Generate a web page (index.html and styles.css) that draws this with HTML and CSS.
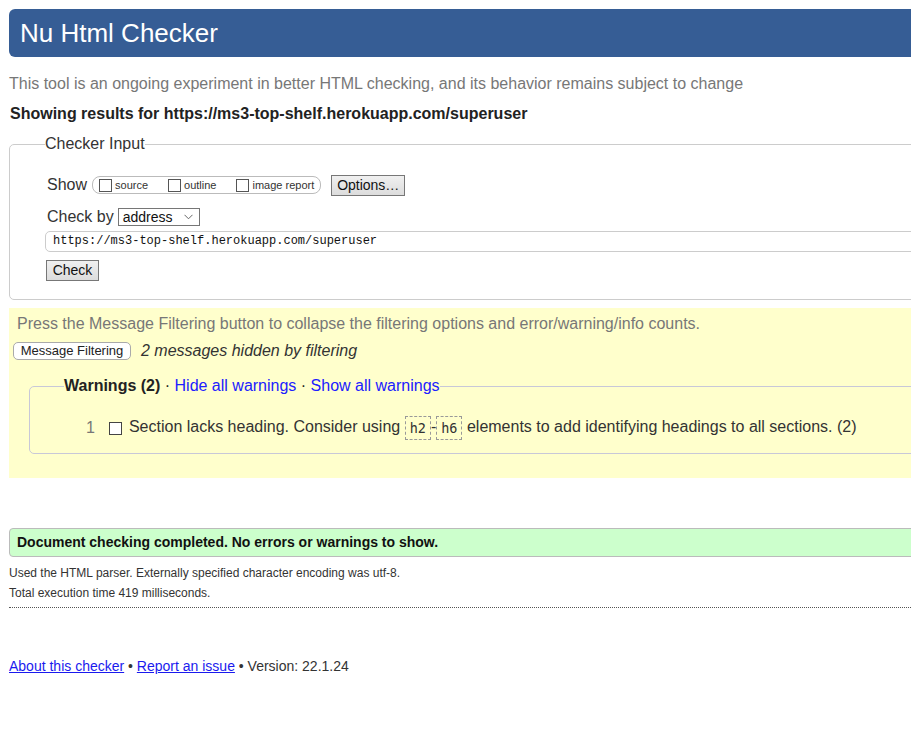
FILE: index.html
```html
<!DOCTYPE html>
<html lang="en">
<head>
<meta charset="utf-8">
<title>Nu Html Checker</title>
<link rel="stylesheet" href="styles.css">
</head>
<body>
<div class="page">
  <h1 class="title">Nu Html Checker</h1>
  <p class="intro">This tool is an ongoing experiment in better HTML checking, and its behavior remains subject to change</p>
  <p class="results">Showing results for https://ms3-top-shelf.herokuapp.com/superuser</p>

  <fieldset class="input-box">
    <legend class="input-legend">Checker Input</legend>
    <div class="show-row">
      <span class="lbl">Show</span>
      <span class="opts">
        <span class="cb"></span><span class="opt">source</span>
        <span class="cb cb-gap"></span><span class="opt">outline</span>
        <span class="cb cb-gap"></span><span class="opt">image report</span>
      </span>
      <span class="btn btn-options">Options…</span>
    </div>
    <div class="by-row">
      <span class="lbl">Check by</span>
      <span class="select">address
        <svg class="chev" width="9" height="6" viewBox="0 0 9 6"><path d="M0.5 0.8 L4.5 4.8 L8.5 0.8" fill="none" stroke="#666" stroke-width="1"/></svg>
      </span>
    </div>
    <div class="url">https://ms3-top-shelf.herokuapp.com/superuser</div>
    <div class="check-row"><span class="btn btn-check">Check</span></div>
  </fieldset>

  <div class="filter-area">
    <p class="filter-note">Press the Message Filtering button to collapse the filtering options and error/warning/info counts.</p>
    <div class="filter-row">
      <span class="btn-mf">Message Filtering</span>
      <em class="hidden-note">2 messages hidden by filtering</em>
    </div>
    <fieldset class="warnings">
      <legend class="warn-legend"><strong>Warnings (2)</strong> · <a href="#" class="wlink">Hide all warnings</a> · <a href="#" class="wlink">Show all warnings</a></legend>
      <div class="msg">
        <span class="num">1</span>
        <span class="cb msg-cb"></span>
        <span class="msg-text">Section lacks heading. Consider using <code class="code">h2</code>-<code class="code">h6</code> elements to add identifying headings to all sections. (2)</span>
      </div>
    </fieldset>
  </div>

  <div class="success">Document checking completed. No errors or warnings to show.</div>
  <p class="details">Used the HTML parser. Externally specified character encoding was utf-8.</p>
  <p class="details">Total execution time 419 milliseconds.</p>
  <div class="dotted"></div>
  <p class="footer"><a href="#" class="flink">About this checker</a> • <a href="#" class="flink">Report an issue</a> • Version: 22.1.24</p>
</div>
</body>
</html>
```

FILE: styles.css
```css
html, body {
  margin: 0;
  padding: 0;
  overflow: hidden;
  background: #fff;
}

.page {
  width: 980px;
  padding: 9px 0 0 9px;
  font-family: "Liberation Sans", Arial, sans-serif;
  color: #222;
}

.title {
  margin: 0;
  height: 48px;
  line-height: 48px;
  padding-left: 11px;
  background: #365d95;
  color: #fff;
  font-size: 26px;
  font-weight: normal;
  border-radius: 6px;
}

.intro {
  margin: 17px 0 0;
  font-size: 16px;
  line-height: 20px;
  color: #777;
}

.results {
  margin: 10px 0 0 1px;
  font-size: 16px;
  line-height: 20px;
  font-weight: bold;
  color: #222;
}

.input-box {
  margin: 10px 0 0;
  padding: 19px 0 18px 35px;
  border: 1px solid #ccc;
  border-radius: 5px;
  min-width: 0;
}

.input-legend {
  padding: 0;
  font-size: 16px;
  line-height: 20px;
  color: #333;
}

.show-row {
  display: flex;
  align-items: center;
  height: 24px;
}

.lbl {
  font-size: 16px;
  color: #333;
  padding-left: 2px;
}

.opts {
  display: flex;
  align-items: center;
  height: 16px;
  margin-left: 5px;
  padding: 0 6px;
  border: 1px solid #bbb;
  border-radius: 8px;
}

.cb {
  display: inline-block;
  width: 11px;
  height: 11px;
  border: 1px solid #555;
  background: #fff;
  flex: none;
}

.cb-gap {
  margin-left: 20px;
}

.opt {
  margin-left: 3px;
  font-size: 11px;
  color: #333;
  line-height: 14px;
}

.btn {
  display: inline-block;
  box-sizing: border-box;
  height: 21px;
  line-height: 19px;
  border: 1px solid #777;
  background: linear-gradient(#f0f0f0, #dcdcdc);
  font-size: 14px;
  color: #111;
  text-align: center;
}

.btn-options {
  width: 74px;
  margin-left: 10px;
}

.by-row {
  display: flex;
  align-items: center;
  height: 22px;
  margin-top: 9px;
}

.select {
  display: flex;
  align-items: center;
  justify-content: space-between;
  box-sizing: border-box;
  width: 82px;
  height: 18px;
  margin-left: 4px;
  padding: 0 6px 0 4px;
  border: 1px solid #767676;
  font-size: 14px;
  color: #111;
}

.chev {
  display: block;
}

.url {
  box-sizing: border-box;
  height: 21px;
  margin-top: 3px;
  padding-left: 7px;
  line-height: 19px;
  border: 1px solid #ccc;
  border-radius: 5px;
  font-family: "Liberation Mono", "DejaVu Sans Mono", monospace;
  font-size: 12px;
  color: #111;
}

.check-row {
  margin-top: 8px;
  height: 21px;
  padding-left: 1px;
}

.btn-check {
  width: 53px;
}

.filter-area {
  margin-top: 8px;
  padding: 6px 0 24px 4px;
  background: #ffffcc;
}

.filter-note {
  margin: 0 0 0 4px;
  font-size: 16px;
  line-height: 20px;
  color: #777;
}

.filter-row {
  display: flex;
  align-items: center;
  height: 20px;
  margin-top: 7px;
}

.btn-mf {
  box-sizing: border-box;
  width: 118px;
  height: 18px;
  line-height: 16px;
  border: 1px solid #aaa;
  border-radius: 5px;
  background: #fff;
  font-size: 13px;
  color: #222;
  text-align: center;
}

.hidden-note {
  margin-left: 10px;
  font-size: 16px;
  color: #333;
}

.warnings {
  margin: 15px 0 0 16px;
  padding: 20px 0 13px 34px;
  border: 1px solid #c8c8d8;
  border-radius: 5px;
  min-width: 0;
}

.warn-legend {
  padding: 0;
  font-size: 16px;
  line-height: 20px;
  color: #222;
}

.wlink {
  color: #2020ff;
  text-decoration: none;
}

.msg {
  display: flex;
  align-items: center;
  height: 24px;
  font-size: 16px;
  color: #333;
}

.num {
  margin-left: 22px;
  color: #777;
}

.msg-cb {
  margin-left: 14px;
  width: 11px;
  height: 11px;
  border-color: #444;
}

.msg-text {
  margin-left: 7px;
  white-space: nowrap;
}

.code {
  display: inline-block;
  box-sizing: border-box;
  height: 24px;
  line-height: 22px;
  padding: 0 4px;
  border: 1px dashed #999;
  font-family: "DejaVu Sans Mono", "Liberation Mono", monospace;
  font-size: 13.5px;
  color: #333;
  vertical-align: middle;
}

.success {
  box-sizing: border-box;
  height: 29px;
  margin-top: 50px;
  padding-left: 7px;
  line-height: 27px;
  border: 1px solid #bbb;
  border-radius: 4px;
  background: #ccffcc;
  font-size: 14px;
  font-weight: bold;
  color: #111;
}

.details {
  margin: 0;
  font-size: 12px;
  line-height: 20px;
  color: #333;
}

.success + .details {
  margin-top: 6px;
}

.dotted {
  margin-top: 4px;
  border-top: 1px dotted #555;
}

.footer {
  margin: 48px 0 0;
  font-size: 14px;
  line-height: 20px;
  color: #333;
}

.flink {
  color: #1a1aee;
  text-decoration: underline;
}
```
